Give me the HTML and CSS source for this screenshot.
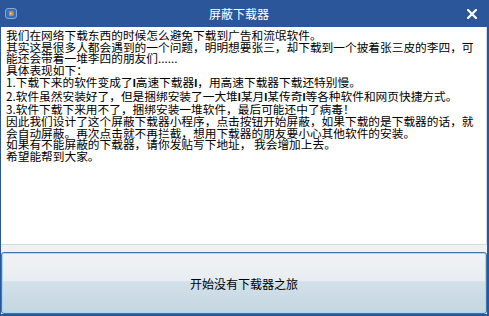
FILE: index.html
```html
<!DOCTYPE html>
<html lang="zh-CN">
<head>
<meta charset="utf-8">
<title>屏蔽下载器</title>
<link rel="stylesheet" href="styles.css">
</head>
<body>
<div class="window">
  <div class="titlebar">
    <span class="app-icon">
      <svg width="12" height="11" viewBox="0 0 12 11">
        <rect x="0.5" y="0.5" width="11" height="10" rx="2.5" fill="#3a6fb8" stroke="#7fa8de"/>
        <path d="M4 3 L7.5 3 Q9 3 9 5.5 Q9 8 7.5 8 L4 8 Z" fill="#c98a3a"/>
        <path d="M5 4.3 L7.2 5.5 L5 6.7 Z" fill="#f3d28f"/>
      </svg>
    </span>
    <span class="title">屏蔽下载器</span>
    <span class="close">
      <svg width="10" height="10" viewBox="0 0 10 10">
        <path d="M1 1 L9 9 M9 1 L1 9" stroke="#ffffff" stroke-width="2.2" stroke-linecap="square"/>
      </svg>
    </span>
  </div>
  <div class="client">
    <div class="memo">
      <p>我们在网络下载东西的时候怎么避免下载到广告和流氓软件。</p>
      <p>其实这是很多人都会遇到的一个问题，明明想要张三，却下载到一个披着张三皮的李四，可<br>能还会带着一堆李四的朋友们......</p>
      <p>具体表现如下：</p>
      <p>1.下载下来的软件变成了<b class="bar">I</b>高速下载器<b class="bar">I</b>，用高速下载器下载还特别慢。</p>
      <p>2.软件虽然安装好了，但是捆绑安装了一大堆<b class="bar">I</b>某月<b class="bar">I</b>某传奇<b class="bar">I</b>等各种软件和网页快捷方式。</p>
      <p>3.软件下载下来用不了，捆绑安装一堆软件，最后可能还中了病毒！</p>
      <p>因此我们设计了这个屏蔽下载器小程序，点击按钮开始屏蔽，如果下载的是下载器的话，就<br>会自动屏蔽。再次点击就不再拦截，想用下载器的朋友要小心其他软件的安装。</p>
      <p>如果有不能屏蔽的下载器，请你发贴写下地址， 我会增加上去。</p>
      <p>希望能帮到大家。</p>
    </div>
    <div class="btn-row">
      <button class="start-btn">开始没有下载器之旅</button>
    </div>
  </div>
</div>
</body>
</html>
```

FILE: styles.css
```css
html, body {
  margin: 0;
  padding: 0;
}
body {
  width: 489px;
  height: 316px;
  overflow: hidden;
  font-family: "Noto Sans CJK SC", "Noto Sans", sans-serif;
}
.window {
  width: 489px;
  height: 316px;
  background: #2b579a;
  display: flex;
  flex-direction: column;
}
.titlebar {
  height: 27px;
  display: flex;
  align-items: center;
  color: #ffffff;
}
.app-icon {
  width: 12px;
  height: 11px;
  margin-left: 5px;
  display: flex;
}
.title {
  flex: 1;
  text-align: center;
  font-size: 12px;
  line-height: 14px;
  padding-left: 1px;
}
.close {
  width: 29px;
  height: 10px;
  padding-left: 7px;
  box-sizing: border-box;
  display: flex;
}
.client {
  flex: 1;
  margin: 0 2px 2px 1px;
  background: #f0f0f0;
  display: flex;
  flex-direction: column;
}
.memo {
  height: 215px;
  background: #ffffff;
  border-bottom: 1px solid #c8dcea;
  border-right: 1px solid #c8dcea;
  padding: 2px 0 0 5px;
  font-size: 11.7px;
  line-height: 11.7px;
  color: #000000;
  white-space: nowrap;
  overflow: hidden;
}
.memo p {
  margin: 0;
}
.bar {
  font-family: "Liberation Sans", sans-serif;
  font-weight: 700;
  font-size: 11px;
}
.btn-row {
  flex: 1;
  display: flex;
  padding-top: 7px;
}
.start-btn {
  flex: 1;
  margin: 0;
  border: 1px solid #3c78a8;
  border-radius: 3px;
  box-shadow: inset 0 0 0 1px #a9d8f2;
  background: linear-gradient(to bottom, #f1f3f5 0%, #e8edf1 46%, #d2e0e9 48%, #c4d6e1 100%);
  font-family: "Noto Sans CJK SC", "Noto Sans", sans-serif;
  font-size: 12px;
  color: #000000;
  padding: 0;
}
```
